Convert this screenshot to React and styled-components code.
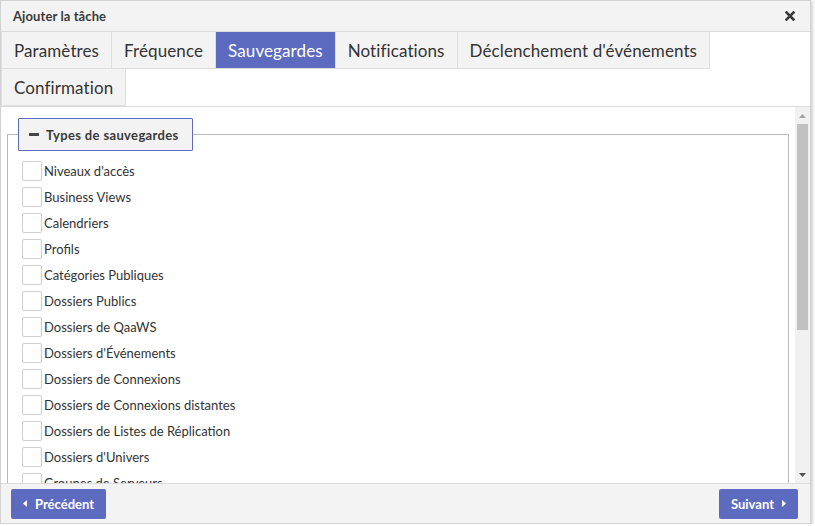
import React, { useState } from "react";
import styled, { createGlobalStyle } from "styled-components";

const GlobalStyle = createGlobalStyle`
    html, body {
        margin: 0;
        padding: 0;
        background: #ffffff;
        font-family: Lato, "Liberation Sans", sans-serif;
        color: #333;
    }
    * { box-sizing: border-box; }
`;

const tabs = [
    "Paramètres",
    "Fréquence",
    "Sauvegardes",
    "Notifications",
    "Déclenchement d'événements",
    "Confirmation",
];

const types = [
    "Niveaux d'accès",
    "Business Views",
    "Calendriers",
    "Profils",
    "Catégories Publiques",
    "Dossiers Publics",
    "Dossiers de QaaWS",
    "Dossiers d'Événements",
    "Dossiers de Connexions",
    "Dossiers de Connexions distantes",
    "Dossiers de Listes de Réplication",
    "Dossiers d'Univers",
    "Groupes de Serveurs",
    "Groupes d'utilisateurs",
    "Serveurs",
    "Utilisateurs",
    "Applications",
    "Licences",
    "Documents",
    "Univers",
    "Connexions",
];

const App = () => {
    const [active, setActive] = useState("Sauvegardes");
    const [checked, setChecked] = useState({});

    const toggle = (name) => {
        setChecked({ ...checked, [name]: !checked[name] });
    };

    return <>
        <GlobalStyle />
        <Dialog>
            <TitleBar>
                <Title>Ajouter la tâche</Title>
                <Close aria-label="Fermer">
                    <svg width="10" height="10" viewBox="0 0 10 10">
                        <path d="M1.5 1.5 L8.5 8.5 M8.5 1.5 L1.5 8.5" stroke="#3a3a3a" strokeWidth="2.6" strokeLinecap="square" />
                    </svg>
                </Close>
            </TitleBar>
            <TabBar>
                {tabs.map(t => (
                    <Tab key={t} $active={t === active} onClick={() => setActive(t)}>{t}</Tab>
                ))}
            </TabBar>
            <Body>
                <ScrollArea>
                    <Fieldset>
                        <Legend>
                            <svg width="10" height="3" viewBox="0 0 10 3">
                                <rect width="10" height="3" fill="#444" />
                            </svg>
                            Types de sauvegardes
                        </Legend>
                        <List>
                            {types.map(t => (
                                <Item key={t} onClick={() => toggle(t)}>
                                    <Box $checked={!!checked[t]} />
                                    <Label>{t}</Label>
                                </Item>
                            ))}
                        </List>
                    </Fieldset>
                </ScrollArea>
                <Scrollbar>
                    <Arrow>
                        <svg width="7" height="4" viewBox="0 0 7 4"><polygon points="0,4 3.5,0 7,4" fill="#a3a3a3" /></svg>
                    </Arrow>
                    <Track>
                        <Thumb />
                    </Track>
                    <Arrow>
                        <svg width="7" height="4" viewBox="0 0 7 4"><polygon points="0,0 7,0 3.5,4" fill="#505050" /></svg>
                    </Arrow>
                </Scrollbar>
            </Body>
            <Footer>
                <NavButton>
                    <svg width="4" height="7" viewBox="0 0 4 7"><polygon points="4,0 4,7 0,3.5" fill="#fff" /></svg>
                    Précédent
                </NavButton>
                <NavButton>
                    Suivant
                    <svg width="4" height="7" viewBox="0 0 4 7"><polygon points="0,0 4,3.5 0,7" fill="#fff" /></svg>
                </NavButton>
            </Footer>
        </Dialog>
    </>;
}

const Dialog = styled.div`
    width: 811px;
    height: 524px;
    display: flex;
    flex-direction: column;
    background: #fff;
    border: 1px solid #d2d2d2;
    box-shadow: 1px 1px 4px rgba(0, 0, 0, 0.25);
    overflow: hidden;
`;

const TitleBar = styled.div`
    height: 31px;
    flex: none;
    display: flex;
    align-items: center;
    justify-content: space-between;
    padding: 0 15px 0 12px;
    background: #f3f3f3;
    border-bottom: 1px solid #dcdcdc;
`;

const Title = styled.div`
    font-size: 13px;
    font-weight: 700;
    color: #3a3a3a;
    letter-spacing: 0.1px;
`;

const Close = styled.button`
    border: none;
    background: none;
    padding: 0;
    display: flex;
    cursor: pointer;
`;

const TabBar = styled.div`
    flex: none;
    height: 75px;
    display: flex;
    flex-wrap: wrap;
    align-content: flex-start;
    padding-left: 1px;
    border-bottom: 1px solid #dcdcdc;
`;

const Tab = styled.div`
    height: 37px;
    padding: 0 12px;
    display: flex;
    align-items: center;
    font-size: 17px;
    letter-spacing: 0.1px;
    color: ${p => p.$active ? "#fff" : "#333"};
    background: ${p => p.$active ? "#5c6bc0" : "#f3f3f3"};
    border-right: 1px solid #dedede;
    border-bottom: 1px solid #dedede;
    border-left: 1px solid #dedede;
    margin-left: -1px;
    cursor: pointer;
`;

const Body = styled.div`
    flex: 1;
    min-height: 0;
    display: flex;
`;

const ScrollArea = styled.div`
    flex: 1;
    overflow: hidden;
    padding: 11px 6px 0 6px;
`;

const Fieldset = styled.fieldset`
    margin: 0;
    padding: 10px 0 12px 14px;
    border: 1px solid #b8b8b8;
    min-width: 0;
`;

const Legend = styled.legend`
    margin-left: -4px;
    height: 33px;
    padding: 0 13px 0 10px;
    display: flex;
    align-items: center;
    gap: 7px;
    font-size: 13px;
    font-weight: 700;
    letter-spacing: 0.35px;
    color: #3a3a3a;
    background: #f3f3f3;
    border: 1px solid #5c6bc0;
    border-radius: 1px;
`;

const List = styled.div`
    display: flex;
    flex-direction: column;
    gap: 6px;
`;

const Item = styled.label`
    display: flex;
    align-items: center;
    gap: 2px;
    height: 20px;
    cursor: pointer;
`;

const Box = styled.span`
    width: 20px;
    height: 20px;
    flex: none;
    border: 1px solid #cfcfcf;
    border-radius: 2px;
    background: ${p => p.$checked ? "#5c6bc0" : "#fff"};
`;

const Label = styled.span`
    font-size: 13px;
    color: #333;
`;

const Scrollbar = styled.div`
    width: 15px;
    flex: none;
    display: flex;
    flex-direction: column;
    background: #f1f1f1;
`;

const Arrow = styled.div`
    height: 17px;
    flex: none;
    display: flex;
    align-items: center;
    justify-content: center;
`;

const Track = styled.div`
    flex: 1;
    padding: 0 2px;
`;

const Thumb = styled.div`
    height: 206px;
    background: #c1c1c1;
`;

const Footer = styled.div`
    height: 40px;
    flex: none;
    display: flex;
    align-items: center;
    justify-content: space-between;
    padding: 0 12px 0 10px;
    background: #f3f3f3;
    border-top: 1px solid #dcdcdc;
`;

const NavButton = styled.button`
    height: 30px;
    padding: 0 12px;
    display: flex;
    align-items: center;
    gap: 8px;
    border: none;
    border-radius: 2px;
    background: #5c6bc0;
    color: #fff;
    font-family: Lato, "Liberation Sans", sans-serif;
    font-size: 13px;
    font-weight: 700;
    cursor: pointer;
`;

export default App;
